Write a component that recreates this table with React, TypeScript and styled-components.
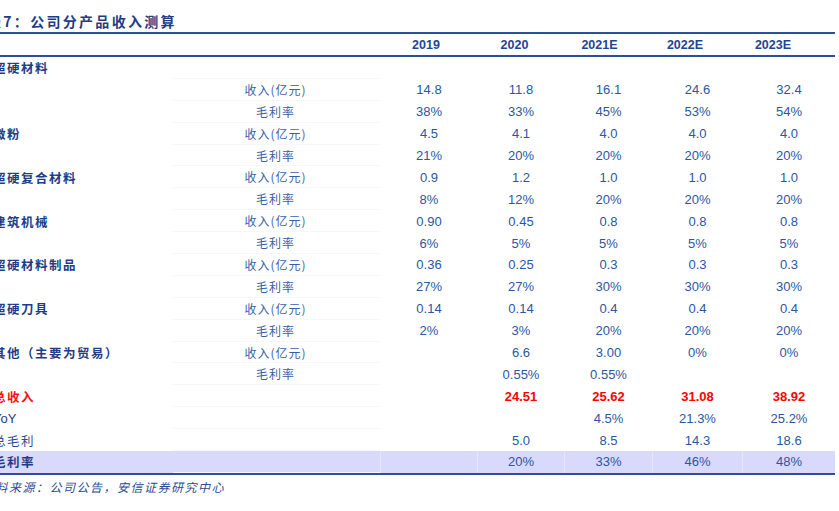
import React from "react";
import styled, { createGlobalStyle } from "styled-components";

const GlobalStyle = createGlobalStyle`
  html, body {
    margin: 0;
    padding: 0;
    background: #ffffff;
    overflow: hidden;
  }
`;

const CJK = `"Noto Sans CJK SC", "Noto Sans", sans-serif`;
const NUM = `"Liberation Sans", Arial, sans-serif`;

const LINE = "#2c4e9c";

// the source table is cropped on the left, so the page starts off-screen
const Page = styled.div`
  width: 847px;
  margin-left: -12px;
  display: flex;
  flex-direction: column;
`;

const Title = styled.div`
  height: 34px;
  display: flex;
  align-items: flex-end;
  padding-bottom: 1px;
  text-indent: -1px;
  box-sizing: border-box;
  font-family: ${CJK};
  font-size: 14px;
  font-weight: 700;
  letter-spacing: 2.3px;
  color: #1f3d86;
  border-bottom: 2px solid ${LINE};
`;

const COLS = "185px 207px 97px 87px 88px 90px 93px";
const HEAD_COLS = "185px 207px 92px 85px 85px 86px 90px 17px";

const HeaderRow = styled.div`
  display: grid;
  grid-template-columns: ${HEAD_COLS};
  height: 21px;
  align-items: center;
  border-bottom: 2px solid ${LINE};
`;

const HeadCell = styled.div`
  text-align: center;
  font-family: ${NUM};
  font-size: 12.5px;
  font-weight: 700;
  color: #1f4596;
`;

const Body = styled.div`
  display: flex;
  flex-direction: column;
  border-bottom: 2px solid ${LINE};
`;

const Row = styled.div<{ $hl?: boolean }>`
  display: grid;
  grid-template-columns: ${COLS};
  height: 21.9px;
  align-items: stretch;
  background: ${(p) => (p.$hl ? "#d9d9fb" : "transparent")};
`;

type Tone = "cat" | "sub" | "red" | "plain" | "latin";

const Label = styled.div<{ $tone: Tone }>`
  display: flex;
  align-items: center;
  padding-left: 5px;
  white-space: nowrap;
  font-family: ${(p) => (p.$tone === "latin" ? NUM : CJK)};
  font-size: ${(p) => (p.$tone === "latin" ? "13px" : "12.5px")};
  letter-spacing: ${(p) => (p.$tone === "latin" ? "0" : "1.5px")};
  font-weight: ${(p) => (p.$tone === "cat" || p.$tone === "red" ? 700 : 400)};
  color: ${(p) => (p.$tone === "red" ? "#ff1010" : p.$tone === "plain" ? "#2a4b95" : "#1f3d86")};
`;

const SubLabel = styled.div`
  display: flex;
  align-items: center;
  justify-content: center;
  white-space: nowrap;
  font-family: ${CJK};
  font-size: 12px;
  letter-spacing: 1px;
  color: #3a5fa6;
  padding-right: 2px;
  border-bottom: 1px solid #f6f7f9;
`;

const Cell = styled.div<{ $red?: boolean; $hl?: boolean }>`
  display: flex;
  align-items: center;
  justify-content: center;
  font-family: ${NUM};
  font-size: 13px;
  font-weight: ${(p) => (p.$red ? 700 : 400)};
  color: ${(p) => (p.$red ? "#ff0000" : "#2b56a3")};
  border-left: 1px solid ${(p) => (p.$hl ? "#e6e6fb" : "transparent")};
`;

const Source = styled.div`
  height: 24px;
  display: flex;
  align-items: center;
  margin-left: -6px;
  font-family: ${CJK};
  font-size: 12px;
  font-style: italic;
  letter-spacing: 1.5px;
  color: #2a4b95;
`;

type Line = {
  label?: string;
  tone?: Tone;
  sub?: string;
  values: string[];
  red?: boolean;
  hl?: boolean;
};

const empty = ["", "", "", "", ""];

const pair = (label: string, rev: string[], margin: string[]): Line[] => [
  { label, tone: "cat", sub: "收入(亿元)", values: rev },
  { sub: "毛利率", values: margin },
];

const rows: Line[] = [
  { label: "超硬材料", tone: "cat", values: empty },
  { sub: "收入(亿元)", values: ["14.8", "11.8", "16.1", "24.6", "32.4"] },
  { sub: "毛利率", values: ["38%", "33%", "45%", "53%", "54%"] },
  ...pair("微粉", ["4.5", "4.1", "4.0", "4.0", "4.0"], ["21%", "20%", "20%", "20%", "20%"]),
  ...pair("超硬复合材料", ["0.9", "1.2", "1.0", "1.0", "1.0"], ["8%", "12%", "20%", "20%", "20%"]),
  ...pair("建筑机械", ["0.90", "0.45", "0.8", "0.8", "0.8"], ["6%", "5%", "5%", "5%", "5%"]),
  ...pair("超硬材料制品", ["0.36", "0.25", "0.3", "0.3", "0.3"], ["27%", "27%", "30%", "30%", "30%"]),
  ...pair("超硬刀具", ["0.14", "0.14", "0.4", "0.4", "0.4"], ["2%", "3%", "20%", "20%", "20%"]),
  ...pair("其他（主要为贸易）", ["", "6.6", "3.00", "0%", "0%"], ["", "0.55%", "0.55%", "", ""]),
  { label: "总收入", tone: "red", values: ["", "24.51", "25.62", "31.08", "38.92"], red: true },
  { label: "YoY", tone: "latin", values: ["", "", "4.5%", "21.3%", "25.2%"] },
  { label: "总毛利", tone: "plain", values: ["", "5.0", "8.5", "14.3", "18.6"] },
  { label: "毛利率", tone: "cat", values: ["", "20%", "33%", "46%", "48%"], hl: true },
];

const years = ["2019", "2020", "2021E", "2022E", "2023E"];

export default function App() {
  return (
    <>
      <GlobalStyle />
      <Page>
        <Title>表7：公司分产品收入测算</Title>
        <HeaderRow>
          <div />
          <div />
          {years.map((y) => (
            <HeadCell key={y}>{y}</HeadCell>
          ))}
          <div />
        </HeaderRow>
        <Body>
          {rows.map((r, i) => (
            <Row key={i} $hl={r.hl}>
              <Label $tone={r.tone ?? "cat"}>{r.label ?? ""}</Label>
              <SubLabel>{r.sub ?? ""}</SubLabel>
              {r.values.map((v, j) => (
                <Cell key={j} $red={r.red} $hl={r.hl}>
                  {v}
                </Cell>
              ))}
            </Row>
          ))}
        </Body>
        <Source>资料来源：公司公告，安信证券研究中心</Source>
      </Page>
    </>
  );
}
